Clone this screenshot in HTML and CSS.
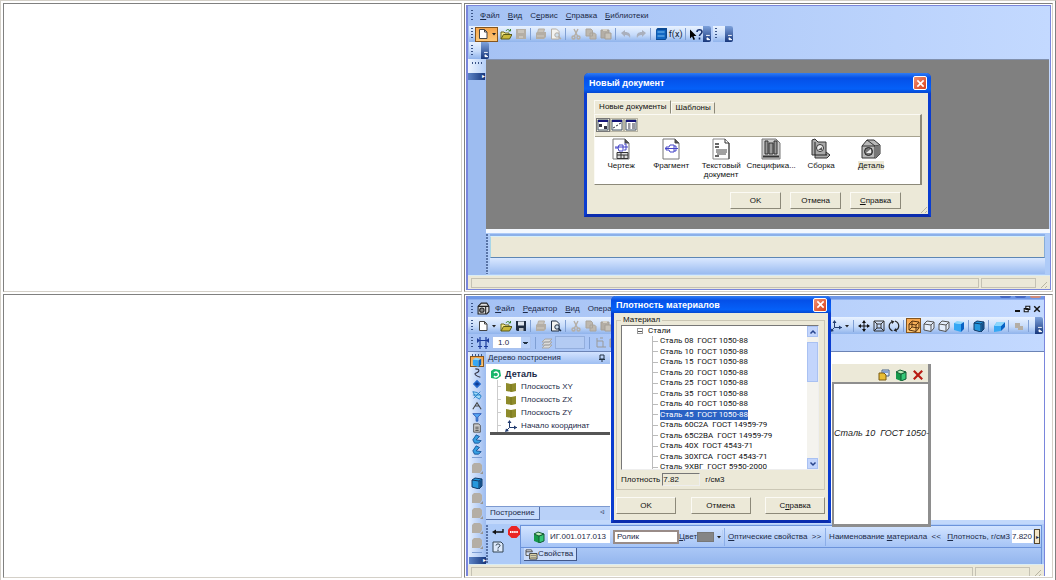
FILE: index.html
```html
<!DOCTYPE html>
<html lang="ru">
<head>
<meta charset="utf-8">
<title>Новый документ</title>
<link rel="stylesheet" href="styles.css">
</head>
<body>
<svg class="defs" aria-hidden="true">
  <symbol id="new" viewBox="0 0 12 12"><path d="M2.500 1.500h5l2.500 2.500v6.500h-7.500z" fill="#fff" stroke="#444"/><path d="M7.500 1.500v2.500h2.500" fill="none" stroke="#444"/></symbol>
  <symbol id="open" viewBox="0 0 12 12"><path d="M1 11V4h3l1 1h4v2" fill="#f4e88a" stroke="#6b6a20"/><path d="M1 11l2.500-4.500H12L9.500 11z" fill="#c9b93a" stroke="#5a5a18"/><path d="M6 3c1-2 3-2 4 0M8.500 3H10.500V1" fill="none" stroke="#35802b"/></symbol>
  <symbol id="save" viewBox="0 0 12 12"><path d="M1 1h10v10H2l-1-1z" fill="currentColor"/><path d="M3 1.500h6v4H3z" fill="#dfe6ee"/><path d="M4 8h4.500v3H4z" fill="#b9c0c8"/></symbol>
  <symbol id="saveoff" viewBox="0 0 12 12"><path d="M1 1h10v10H1z" fill="#b4aea5"/><path d="M3 2h6v3H3zM4 8h4v2H4z" fill="#c9c4bb"/></symbol>
  <symbol id="print" viewBox="0 0 12 12"><path d="M3.500 1h6L8.500 5h-6z" fill="#c9c4bb" stroke="#b4aea5"/><path d="M1 5l1-1h9v5l-2 2H1z" fill="#b4aea5"/><path d="M2 8h7" stroke="#d0cbc2"/></symbol>
  <symbol id="preview" viewBox="0 0 12 12"><path d="M1.500 1h5L9 3.500V11H1.500z" fill="#f3f3f0" stroke="currentColor"/><circle cx="7" cy="7" r="2.200" fill="#cfe0ee" stroke="currentColor"/><path d="M8.500 8.500L11 11" stroke="currentColor" stroke-width="1.500"/></symbol>
  <symbol id="cut" viewBox="0 0 12 12" fill="none" stroke="#b4aea5" stroke-width="1.400"><path d="M4 1l3.500 7M8 1L4.500 8"/><circle cx="3.500" cy="9.500" r="1.500"/><circle cx="8.500" cy="9.500" r="1.500"/></symbol>
  <symbol id="copy" viewBox="0 0 12 12"><path d="M1 1h5l1.500 1.500V8H1zM5 5h4.500L11 6.500V11H5z" fill="#bdb8af" stroke="#aaa49b"/></symbol>
  <symbol id="paste" viewBox="0 0 12 12"><path d="M1 2h8v8H1z" fill="#b4aea5" stroke="#a59f96"/><path d="M3 1h4v2H3z" fill="#d4d0c6"/><path d="M5 5h6v6H5z" fill="#c7c2b9" stroke="#a59f96"/></symbol>
  <symbol id="undo" viewBox="0 0 12 12"><path d="M1 5l4-3v2c4 0 6 2 5 6-1-2-2-3-5-3v2z" fill="#aab0bd"/></symbol>
  <symbol id="redo" viewBox="0 0 12 12"><path d="M11 5L7 2v2C3 4 1 6 2 10c1-2 2-3 5-3v2z" fill="#aab0bd"/></symbol>
  <symbol id="lib" viewBox="0 0 12 12"><path d="M1 1.500L2.500 0H12v10l-1.500 2H1z" fill="#0c4a94"/><path d="M1.500 2h9v9h-9z" fill="#1268c4"/><path d="M2.500 4h7M2.500 8h7" stroke="#7cc0f4"/></symbol>
  <symbol id="help" viewBox="0 0 14 12"><path d="M1 1v9l2-2 1.500 3.500 1.500-.7L4.600 7.500H7.500z" fill="#000"/><path d="M8 3.500C8 .5 13 .5 13 3.500c0 2-2.500 2-2.500 4M10.500 9v2" fill="none" stroke="#16306e" stroke-width="1.600"/></symbol>
  <symbol id="cap" viewBox="0 0 8 17"><path d="M3 10h4M4 14.500V12.500l3 2z" stroke="#fff" fill="#fff"/></symbol>
  <symbol id="draft" viewBox="0 0 18 22"><path d="M1 1h12l4 4v16H1z" fill="#fff" stroke="#777"/><path d="M13 1v4h4" fill="#555" stroke="#444"/><path d="M3 10h3l1-3h4v6H7l-1-3M12 6h2v6h-2M3 9h13" fill="none" stroke="#4646c8"/><path d="M5 14.500h11v6H5zM5 17h11M9 14.500v6M12 17v3.500" fill="#ddd" stroke="#333"/></symbol>
  <symbol id="fragment" viewBox="0 0 18 22"><path d="M1 1h12l4 4v16H1z" fill="#fff" stroke="#777"/><path d="M13 1v4h4" fill="#555" stroke="#444"/><path d="M4 9h3l1-2h4v7H8l-1-2H4zM12 8h2v5h-2M3 10.500h13" fill="none" stroke="#4646c8"/></symbol>
  <symbol id="textdoc" viewBox="0 0 18 22"><path d="M1 1h12l4 4v16H1z" fill="#fff" stroke="#888"/><path d="M13 1v4h4v16" fill="none" stroke="#333"/><path d="M3 6h4M3 9h4M3 18h4" stroke="#333" stroke-width="1.500"/><path d="M4 12h11M4 14h11M5 16h9" stroke="#444"/></symbol>
  <symbol id="spec" viewBox="0 0 20 22"><path d="M1 1h14l4 4v16H1z" fill="#ccc" stroke="#777"/><path d="M4 3h3v13H4zM8 5h4v11H8zM13 3h3v13h-3z" fill="#999" stroke="#333"/><path d="M2 18.500h16" stroke="#333" stroke-width="2"/></symbol>
  <symbol id="assembly" viewBox="0 0 20 22"><path d="M1 2l3-1 3 3h8v10l4 3-3 3H4V17H1z" fill="#aaa" stroke="#333"/><path d="M4 4v13h12M15 14v3" fill="none" stroke="#222"/><circle cx="9" cy="10" r="3.500" fill="#eee" stroke="#333"/><path d="M7 12l4-3v3z" fill="#555"/></symbol>
  <symbol id="detail" viewBox="0 0 20 22"><path d="M1 8l5-6h7l6 5v9l-4 4H1z" fill="#b8b8b8" stroke="#333"/><path d="M1 8h13v12M14 8l5-1M6 2l8 6" fill="none" stroke="#333"/><path d="M14 8l5-1v9l-4 4h-1z" fill="#777"/><circle cx="7.500" cy="13.500" r="4" fill="#777" stroke="#222"/><path d="M5 15l5-4v4z" fill="#eee"/></symbol>
  <symbol id="v1" viewBox="0 0 12 12"><path d="M1 1h10v10H1z" fill="#fff" stroke="#456"/><path d="M1 2h10" stroke="#15157a" stroke-width="2"/><path d="M2 5h3v3H2zM7 7h3v3H7z" fill="#334"/></symbol>
  <symbol id="v2" viewBox="0 0 12 12"><path d="M1 1h10v10H1z" fill="#fff" stroke="#456"/><path d="M1 2h10" stroke="#15157a" stroke-width="2"/><path d="M2 9l2-1M5 7l2-1M8 5l2-1" stroke="#334"/></symbol>
  <symbol id="v3" viewBox="0 0 12 12"><path d="M1 1h10v10H1z" fill="#fff" stroke="#456"/><path d="M1 2h10" stroke="#15157a" stroke-width="2"/><path d="M3 5h2.500M3 7h2.500M3 9h2.500M7 5h3M7 7h3M7 9h3" stroke="#334"/></symbol>
  <symbol id="x" viewBox="0 0 10 10"><path d="M1.500 1.500l7 7M8.500 1.500l-7 7" stroke="currentColor" stroke-width="1.800"/></symbol>
  <symbol id="app" viewBox="0 0 12 12"><path d="M1 4l3-3h5l2 3v5l-2 2H1z" fill="#ddd" stroke="#222"/><path d="M1 4h7v7M8 4h3" fill="none" stroke="#222"/><circle cx="4.500" cy="7.500" r="2" fill="#888" stroke="#222"/></symbol>
  <symbol id="step" viewBox="0 0 12 12"><path d="M3 0v12M9 0v12M0 3.500h12" stroke="#1c3c9c" stroke-width="1.200"/><path d="M0 1v5l3-2.500zM12 1v5L9 3.500z" fill="#1c3c9c"/><path d="M1 9.500h4M7 9.500h4" stroke="#1c3c9c"/></symbol>
  <symbol id="layers" viewBox="0 0 12 12"><path d="M1 5l3-3h7L8 5zM1 8l3-3h7L8 8zM1 11l3-3h7l-3 3z" fill="#dcdcdc" stroke="#a8a8a8"/></symbol>
  <symbol id="axisg" viewBox="0 0 12 12"><path d="M2 1v9h9M2 4h6v6M5 1h3" fill="none" stroke="#999"/></symbol>
  <symbol id="cubeb" viewBox="0 0 12 12"><path d="M1 3l7 1v8L1 10z" fill="#36a8f4"/><path d="M1 3l3-2 7 1-3 2z" fill="#8bd6fc"/><path d="M8 4l3-2v7l-3 3z" fill="#0862c4"/></symbol>
  <symbol id="cubed" viewBox="0 0 12 12"><path d="M1 3l3-2 7 1v7l-3 3-7-2z" fill="#2597dc" stroke="#123a68"/><path d="M1 3l7 1v8M8 4l3-2" fill="none" stroke="#123a68"/><path d="M8.500 4.500l2.500-2v6.500l-2.500 2z" fill="#164f88"/></symbol>
  <symbol id="cubew" viewBox="0 0 12 12"><path d="M1 4l3-3 7 1v6l-3 3.500-7-1.500zM1 4l7 1v6.500M8 5l3-3" fill="#e4eefc" stroke="#555"/></symbol>
  <symbol id="cubex" viewBox="0 0 12 12"><path d="M1 4l3-3 7 1v6l-3 3.500-7-1.500zM1 4l7 1v6.500M8 5l3-3M4 1v6l7 1M4 7l-3 3" fill="none" stroke="#5a3510"/></symbol>
  <symbol id="persp" viewBox="0 0 12 12"><path d="M1 6l3-4h8l-4 4v5l-7 1z" fill="#36a8f4"/><path d="M8 6l4-4v5l-4 4z" fill="#0862c4"/><path d="M1 6l3-4h8L8 6z" fill="#8bd6fc"/></symbol>
  <symbol id="gears" viewBox="0 0 12 12"><path d="M2 3h5v3h3v4H5V8H2z" fill="#b4aea5"/></symbol>
  <symbol id="axes" viewBox="0 0 12 12"><path d="M4.500 1v6.500H12M4.500 7.500L1 11" fill="none" stroke="#223c70"/><path d="M4.500 0L2.500 3h4zM12 7.500l-3-2v4zM0 12l1-3.500L4 11z" fill="#223c70"/></symbol>
  <symbol id="move" viewBox="0 0 12 12"><path d="M6 1v10M1 6h10" stroke="#111"/><path d="M6 0L4 3h4zM6 12L4 9h4zM0 6l3-2v4zM12 6L9 4v4z" fill="#111"/></symbol>
  <symbol id="fit" viewBox="0 0 12 12"><path d="M1 1h10v10H1zM4 4h4v4H4zM1 1l3 3M11 1L8 4M1 11l3-3M11 11L8 8" fill="none" stroke="#333"/></symbol>
  <symbol id="rotate" viewBox="0 0 12 12"><path d="M5 1.500C0 3 0 9 4.500 11M7 1C12 3 12 9 7 10.500" fill="none" stroke="#222" stroke-width="1.200"/><path d="M3 0l3.500 1.500L4 4zM9 12l-3.500-1.500L8 8z" fill="#222"/></symbol>
  <symbol id="curve" viewBox="0 0 12 12"><path d="M4 1c6 0 5 4 1 5s1 4 5 5" fill="none" stroke="#334" stroke-width="1.300"/></symbol>
  <symbol id="rhomb" viewBox="0 0 12 12"><path d="M6 1l5 5-5 5-5-5z" fill="#2268cc"/><path d="M3 6l3-2 3 2-3 2z" fill="#103d94"/></symbol>
  <symbol id="surf" viewBox="0 0 12 12"><path d="M1 2l5 1 5 4-2 4-5-3z" fill="#a4dcf8" stroke="#1a78c4"/><path d="M2 10l8-8M1 6h9" stroke="#1a78c4"/></symbol>
  <symbol id="dims" viewBox="0 0 12 12"><path d="M1 10l5-8 5 8M4 6l4 0" fill="none" stroke="#444" stroke-width="1.300"/></symbol>
  <symbol id="filter" viewBox="0 0 12 12"><path d="M1 2h10L7 6v5H5V6z" fill="#58a8f4" stroke="#1c4cae"/></symbol>
  <symbol id="sheet" viewBox="0 0 12 12"><path d="M2 1h6l2 2v8H2z" fill="#ccc" stroke="#444"/><path d="M4 5h4M4 7h4M4 9h4" stroke="#444"/></symbol>
  <symbol id="bend" viewBox="0 0 12 12"><path d="M5 1l4 2-4 4 6 1-3 3H3L1 7z" fill="#36a0e4" stroke="#134c92"/></symbol>
  <symbol id="grey" viewBox="0 0 12 12"><path d="M1 3l2-2h6l2 2v5l-2 3H1z" fill="#b4aea5"/><path d="M12 9v3H9z" fill="#9a9690"/></symbol>
  <symbol id="green" viewBox="0 0 12 12"><path d="M1 3l3-2 6 1 1 6-4 3-6-1z" fill="#16b66a"/><path d="M4 5a2.500 2.500 0 1 1 0 3" fill="none" stroke="#fff" stroke-width="1.400"/></symbol>
  <symbol id="plane" viewBox="0 0 12 12"><path d="M1 2l5 1 5-1v8l-4 1-6-1z" fill="#8e8b2b"/><path d="M6 3v8" stroke="#77741d"/></symbol>
  <symbol id="book" viewBox="0 0 12 12"><path d="M1 3l5 2v7l-5-2z" fill="#16994a"/><path d="M6 5l5-2v7l-5 2z" fill="#36c877" stroke="#115c32"/><path d="M1 3l4-2 6 2-5 2z" fill="#bceeb9" stroke="#115c32"/></symbol>
  <symbol id="props" viewBox="0 0 12 12"><path d="M4 1h7v6H4z" fill="#dfe9f7" stroke="#47638c"/><path d="M1 4h5l2 2v5H1z" fill="#e7bd35" stroke="#7d5c15"/><path d="M5 3h5" stroke="#2659ae"/></symbol>
  <symbol id="tabicon" viewBox="0 0 14 12"><path d="M1 1h6l1 2H1zM1 3v4h3" fill="#f2f6fc" stroke="#444"/><path d="M5 5h8v6H5z" fill="#f4e9b4" stroke="#333"/><path d="M6 7h6M6 9h6" stroke="#777"/></symbol>
  <symbol id="enter" viewBox="0 0 12 12"><path d="M11 3v3H3" fill="none" stroke="#111" stroke-width="1.400"/><path d="M0 6l4-2.500v5z" fill="#111"/></symbol>
  <symbol id="stop" viewBox="0 0 12 12"><path d="M3.500 0h5L12 3.500v5L8.500 12h-5L0 8.500v-5z" fill="#ea2424"/><path d="M2 6h8" stroke="#fff" stroke-width="2" stroke-dasharray="1.500 .6"/></symbol>
  <symbol id="qbox" viewBox="0 0 12 12"><path d="M1 1h8l2 2v8H1z" fill="#dce9fb" stroke="#345"/><path d="M4 4.500c0-2 4-2 4 0 0 1.500-2 1-2 3M6 8.500v1.500" fill="none" stroke="#234"/></symbol>
  <symbol id="pin" viewBox="0 0 8 8"><path d="M2 1h4v4H2zM1 5.500h6M4 5v3" fill="none" stroke="#234"/></symbol>
  <symbol id="up" viewBox="0 0 8 8"><path d="M1.500 5.500L4 3l2.500 2.500" fill="none" stroke="#27448c" stroke-width="1.500"/></symbol>
  <symbol id="down" viewBox="0 0 8 8"><path d="M1.500 2.500L4 5l2.500-2.500" fill="none" stroke="#27448c" stroke-width="1.500"/></symbol>
  <symbol id="tri" viewBox="0 0 6 6"><path d="M1 2h4L3 4.500z" fill="#222"/></symbol>
  <symbol id="restore" viewBox="0 0 10 10"><path d="M3.500 1.500h5v4h-5zM1.500 4.500h5v4h-5z" fill="#e5efff" stroke="#111" stroke-width="1.300"/></symbol>
</svg>

<main class="sheet">
  <section class="cell"></section>
  <section class="cell">
    <div class="window">
      <nav class="menu">
        <i class="grip"></i>
        <a href="#"><u>Ф</u>айл</a><a href="#"><u>В</u>ид</a><a href="#">С<u>е</u>рвис</a><a href="#"><u>С</u>правка</a><a href="#"><u>Б</u>иблиотеки</a>
      </nav>
      <div class="bar">
        <div class="strip">
          <i class="grip"></i>
          <button class="tool wide hot" aria-label="Создать"><svg><use href="#new"/></svg><svg class="tri"><use href="#tri"/></svg></button>
          <button class="tool" aria-label="Открыть"><svg><use href="#open"/></svg></button>
          <button class="tool" aria-label="Сохранить"><svg><use href="#saveoff"/></svg></button>
          <i class="sep"></i>
          <button class="tool" aria-label="Печать"><svg><use href="#print"/></svg></button>
          <button class="tool off" aria-label="Просмотр"><svg><use href="#preview"/></svg></button>
          <i class="sep"></i>
          <button class="tool" aria-label="Вырезать"><svg><use href="#cut"/></svg></button>
          <button class="tool" aria-label="Копировать"><svg><use href="#copy"/></svg></button>
          <button class="tool" aria-label="Вставить"><svg><use href="#paste"/></svg></button>
          <i class="sep"></i>
          <button class="tool" aria-label="Отменить"><svg><use href="#undo"/></svg></button>
          <button class="tool" aria-label="Повторить"><svg><use href="#redo"/></svg></button>
          <i class="sep"></i>
          <button class="tool" aria-label="Менеджер библиотек"><svg><use href="#lib"/></svg></button>
          <button class="tool fx">f(x)</button>
          <i class="sep"></i>
          <button class="tool" aria-label="Помощь"><svg class="big"><use href="#help"/></svg></button>
          <button class="cap" aria-label="Ещё"><svg><use href="#cap"/></svg></button>
        </div>
        <div class="strip short"><i class="grip"></i><button class="cap" aria-label="Ещё"><svg><use href="#cap"/></svg></button></div>
      </div>
      <div class="bar"><div class="strip short"><i class="grip"></i><button class="cap" aria-label="Ещё"><svg><use href="#cap"/></svg></button></div></div>
      <div class="body">
        <div class="side"><div class="stub"><i class="hgrip"></i></div><button class="endcap" aria-label="Панели">▸</button></div>
        <div class="content">
          <div class="desk"></div>
          <div class="lower">
            <i class="dots"></i>
            <div class="message"><div class="field"></div><div class="glow"></div></div>
          </div>
        </div>
      </div>
      <div class="status"><span></span><span class="last"></span><i class="size"></i></div>

      <div class="dialog create" role="dialog" aria-labelledby="t1">
        <header><h2 id="t1">Новый документ</h2><button class="close" aria-label="Закрыть"><svg><use href="#x"/></svg></button></header>
        <div class="pane">
          <div class="tabs"><button class="on">Новые документы</button><button>Шаблоны</button></div>
          <div class="page">
            <div class="views">
              <button class="on" aria-label="Крупные значки"><svg><use href="#v1"/></svg></button><button aria-label="Мелкие значки"><svg><use href="#v2"/></svg></button><button aria-label="Список"><svg><use href="#v3"/></svg></button>
            </div>
            <ul class="docs">
              <li><svg><use href="#draft"/></svg><span>Чертеж</span></li>
              <li><svg><use href="#fragment"/></svg><span>Фрагмент</span></li>
              <li><svg><use href="#textdoc"/></svg><span>Текстовый документ</span></li>
              <li><svg><use href="#spec"/></svg><span>Специфика...</span></li>
              <li><svg><use href="#assembly"/></svg><span>Сборка</span></li>
              <li><svg><use href="#detail"/></svg><span class="picked">Деталь</span></li>
            </ul>
          </div>
          <footer><button class="push">OK</button><button class="push">Отмена</button><button class="push"><u>С</u>правка</button></footer>
          <i class="size corner"></i>
        </div>
      </div>
    </div>
  </section>

  <section class="cell"></section>
  <section class="cell">
    <div class="window second">
      <div class="caption"><i></i><i></i><i></i></div>
      <nav class="menu">
        <i class="grip"></i><svg class="app"><use href="#app"/></svg>
        <a href="#"><u>Ф</u>айл</a><a href="#"><u>Р</u>едактор</a><a href="#"><u>В</u>ид</a><a href="#">Опера</a>
        <span class="mdi"><button aria-label="Свернуть" class="min"></button><button aria-label="Восстановить"><svg><use href="#restore"/></svg></button><button aria-label="Закрыть"><svg><use href="#x"/></svg></button></span>
      </nav>
      <div class="bar long">
        <i class="grip"></i>
        <button class="tool wide" aria-label="Создать"><svg><use href="#new"/></svg><svg class="tri"><use href="#tri"/></svg></button>
        <button class="tool" aria-label="Открыть"><svg><use href="#open"/></svg></button>
        <button class="tool" aria-label="Сохранить"><svg><use href="#save"/></svg></button>
        <i class="sep"></i>
        <button class="tool" aria-label="Печать"><svg><use href="#print"/></svg></button>
        <button class="tool" aria-label="Просмотр"><svg><use href="#preview"/></svg></button>
        <i class="sep"></i>
        <button class="tool" aria-label="Вырезать"><svg><use href="#cut"/></svg></button>
        <button class="tool" aria-label="Копировать"><svg><use href="#copy"/></svg></button>
        <button class="tool" aria-label="Вставить"><svg><use href="#paste"/></svg></button>
        <i class="fill"></i>
        <button class="tool wide" aria-label="Ориентация"><svg><use href="#axes"/></svg><svg class="tri"><use href="#tri"/></svg></button>
        <i class="sep"></i>
        <button class="tool" aria-label="Сдвинуть"><svg><use href="#move"/></svg></button>
        <button class="tool" aria-label="Показать все"><svg><use href="#fit"/></svg></button>
        <button class="tool" aria-label="Повернуть"><svg><use href="#rotate"/></svg></button>
        <i class="sep"></i>
        <button class="tool hot" aria-label="Каркас"><svg><use href="#cubex"/></svg></button>
        <button class="tool" aria-label="Без невидимых линий"><svg><use href="#cubew"/></svg></button>
        <button class="tool" aria-label="Невидимые линии тонкие"><svg><use href="#cubew"/></svg></button>
        <button class="tool" aria-label="Полутоновое"><svg><use href="#cubeb"/></svg></button>
        <i class="sep"></i>
        <button class="tool" aria-label="Полутоновое с каркасом"><svg><use href="#cubed"/></svg></button>
        <i class="sep"></i>
        <button class="tool" aria-label="Перспектива"><svg><use href="#persp"/></svg></button>
        <i class="sep"></i>
        <button class="tool" aria-label="Упрощенное"><svg><use href="#gears"/></svg></button>
        <i class="sep end"></i>
        <button class="cap" aria-label="Ещё"><svg><use href="#cap"/></svg></button>
      </div>
      <div class="bar state">
        <i class="grip"></i>
        <svg class="ico"><use href="#step"/></svg>
        <select class="combo" aria-label="Шаг курсора"><option>1.0</option></select>
        <i class="sep"></i>
        <svg class="ico"><use href="#layers"/></svg>
        <select class="combo off" aria-label="Слой" disabled><option></option></select>
        <i class="sep"></i>
        <svg class="ico"><use href="#axisg"/></svg><svg class="ico"><use href="#paste"/></svg>
      </div>
      <div class="body">
        <div class="side rail">
          <i class="hgrip"></i>
          <button class="hot" aria-label="Деталь"><svg><use href="#cubeb"/></svg></button>
          <button aria-label="Кривые"><svg><use href="#curve"/></svg></button>
          <button aria-label="Поверхности"><svg><use href="#rhomb"/></svg></button>
          <button aria-label="Массивы"><svg><use href="#surf"/></svg></button>
          <button aria-label="Измерения"><svg><use href="#dims"/></svg></button>
          <button aria-label="Фильтры"><svg><use href="#filter"/></svg></button>
          <button aria-label="Спецификация"><svg><use href="#sheet"/></svg></button>
          <button aria-label="Листовое тело"><svg><use href="#bend"/></svg></button>
          <button aria-label="Сгиб"><svg><use href="#bend"/></svg></button>
          <i class="hr"></i>
          <button class="tall" aria-label="Выдавливание"><svg><use href="#grey"/></svg></button>
          <button class="tall" aria-label="Заготовка"><svg><use href="#cubed"/></svg></button>
          <button class="tall" aria-label="Вырезание"><svg><use href="#grey"/></svg></button>
          <button class="tall" aria-label="Скругление"><svg><use href="#grey"/></svg></button>
          <button class="tall" aria-label="Отверстие"><svg><use href="#grey"/></svg></button>
          <button class="tall" aria-label="Оболочка"><svg><use href="#grey"/></svg></button>
          <i class="hr"></i>
          <button class="endcap" aria-label="Панели">▸</button>
        </div>
        <div class="content">
          <div class="model">
            <aside class="tree">
              <h3>Дерево построения<svg><use href="#pin"/></svg></h3>
              <div class="treebody">
                <p><svg><use href="#green"/></svg><b>Деталь</b></p>
                <ul>
                  <li><svg><use href="#plane"/></svg>Плоскость XY</li>
                  <li><svg><use href="#plane"/></svg>Плоскость ZX</li>
                  <li><svg><use href="#plane"/></svg>Плоскость ZY</li>
                  <li><svg><use href="#axes"/></svg>Начало координат</li>
                </ul>
              </div>
              <div class="treetabs"><button>Построение</button><span>◃</span></div>
            </aside>
            <div class="canvas"></div>
          </div>
          <div class="lower properties">
            <i class="dots"></i>
            <div class="control">
              <button aria-label="Создать объект"><svg><use href="#enter"/></svg></button><button aria-label="Прервать"><svg><use href="#stop"/></svg></button>
              <button aria-label="Справка"><svg><use href="#qbox"/></svg></button>
            </div>
            <div class="props">
              <div class="proprow">
                <svg class="ico"><use href="#book"/></svg>
                <input class="code" aria-label="Обозначение" value="ИГ.001.017.013">
                <input class="name" aria-label="Наименование" value="Ролик">
                <span class="color"><u>Ц</u>вет</span>
                <button class="swatch" aria-label="Цвет"><i></i><svg class="tri"><use href="#tri"/></svg></button>
                <button class="flat optic"><u>О</u>птические свойства&nbsp; &gt;&gt;</button>
                <button class="flat mat">Наименование <u>м</u>атериала&nbsp; &lt;&lt;</button>
                <label for="dens"><u>П</u>лотность, г/см3</label>
                <input id="dens" class="dens" value="7.820">
                <button class="spin" aria-label="Изменить">▸</button>
              </div>
              <div class="proptabs"><button><svg><use href="#tabicon"/></svg>Свойства</button></div>
            </div>
          </div>
        </div>
      </div>
      <div class="status"><span></span><span class="last"></span><i class="size"></i></div>

      <div class="popup">
        <div class="poptools"><button aria-label="Свойства"><svg><use href="#props"/></svg></button><button aria-label="Справочник"><svg><use href="#book"/></svg></button><button class="del" aria-label="Удалить"><svg><use href="#x"/></svg></button></div>
        <div class="popbody">Сталь 10&nbsp; ГОСТ 1050-</div>
      </div>

      <div class="dialog density" role="dialog" aria-labelledby="t2">
        <header><h2 id="t2">Плотность материалов</h2><button class="close" aria-label="Закрыть"><svg><use href="#x"/></svg></button></header>
        <div class="pane">
          <fieldset>
            <legend>Материал</legend>
            <div class="list">
              <div class="rows">
                <p><i class="box"></i>Стали</p>
                <ul>
                  <li><span>Сталь 08&nbsp; ГОСТ 1050-88</span></li>
                  <li><span>Сталь 10&nbsp; ГОСТ 1050-88</span></li>
                  <li><span>Сталь 15&nbsp; ГОСТ 1050-88</span></li>
                  <li><span>Сталь 20&nbsp; ГОСТ 1050-88</span></li>
                  <li><span>Сталь 25&nbsp; ГОСТ 1050-88</span></li>
                  <li><span>Сталь 35&nbsp; ГОСТ 1050-88</span></li>
                  <li><span>Сталь 40&nbsp; ГОСТ 1050-88</span></li>
                  <li class="sel"><span>Сталь 45&nbsp; ГОСТ 1050-88</span></li>
                  <li><span>Сталь 60С2А&nbsp; ГОСТ 14959-79</span></li>
                  <li><span>Сталь 65С2ВА&nbsp; ГОСТ 14959-79</span></li>
                  <li><span>Сталь 40Х&nbsp; ГОСТ 4543-71</span></li>
                  <li><span>Сталь 30ХГСА&nbsp; ГОСТ 4543-71</span></li>
                  <li><span>Сталь 9ХВГ&nbsp; ГОСТ 5950-2000</span></li>
                </ul>
              </div>
              <div class="scroll"><button aria-label="Вверх"><svg><use href="#up"/></svg></button><i class="thumb"></i><button aria-label="Вниз"><svg><use href="#down"/></svg></button></div>
            </div>
            <div class="value"><label for="rho">Плотность</label><input id="rho" value="7.82" readonly><span>г/см3</span></div>
          </fieldset>
          <footer><button class="push">OK</button><button class="push">Отмена</button><button class="push">С<u>п</u>равка</button></footer>
        </div>
      </div>
    </div>
  </section>
</main>
</body>
</html>
```
FILE: styles.css
```css
* { box-sizing: border-box; }
body { margin: 0; background: #fff; font: 8px/10px "Liberation Sans", Arial, sans-serif; color: #1c2a48; }
button, input, select { font: inherit; color: inherit; margin: 0; padding: 0; border: 0; background: none; border-radius: 0; }
a { color: inherit; text-decoration: none; }
ul { list-style: none; margin: 0; padding: 0; }
p, h2, h3 { margin: 0; font: inherit; }
svg { display: block; flex: none; }
i { display: block; flex: none; }
.defs { position: absolute; width: 0; height: 0; }

.sheet { display: grid; grid-template-columns: 460fr 590fr; gap: 2px; padding: 2px; border: 1px solid; border-color: #d4d0c8 #808080 #808080 #d4d0c8; }
.cell { min-width: 0; padding: 1px; border: 1px solid; border-color: #808080 #d4d0c8 #d4d0c8 #808080; }

.window { position: relative; display: flex; flex-direction: column; background: linear-gradient(90deg, #a5c2f4, #c3d9ff); border: 1px solid #7a86dc; border-left-width: 2px; }
.window.second { margin-right: 6px; border-top: 0; border-bottom: 0; }
.caption { display: flex; justify-content: flex-end; gap: 4px; height: 4px; padding-right: 3px; background: #6f97e6; border-bottom: 1px solid #8fb0f0; }
.caption i { width: 11px; height: 2px; background: #4468c4; border-radius: 0 0 2px 2px; }
.caption i:last-child { background: #cf8a7a; }
.menu { display: flex; align-items: center; height: 20px; gap: 8px; padding-left: 3px; }
.menu .grip { margin-right: -1px; }
.second .menu { height: 17px; }
.second .menu .grip { margin-right: -3px; }
.app { width: 13px; height: 13px; margin: 0 -3px 0 -1px; }
.mdi { margin-left: auto; display: flex; align-items: center; gap: 3px; padding-right: 4px; color: #111; }
.mdi button { width: 7px; height: 8px; }
.mdi svg { width: 8px; height: 8px; }
.mdi .min { width: 5px; border-bottom: 2px solid #111; height: 6px; }

.bar { display: flex; height: 17px; padding-left: 1px; }
.strip, .long { display: flex; align-items: center; height: 17px; background: linear-gradient(#e9f2ff, #c6dbfa 55%, #8fb3ec); border-radius: 0 3px 3px 0; }
.menu + .bar { height: 16px; }
.menu + .bar .strip { height: 16px; }
.strip { padding-left: 2px; }
.strip.short { width: 20px; justify-content: space-between; }
.strip + .strip { margin-left: 2px; }
.grip { width: 2px; height: 12px; margin-right: 2px; background: repeating-linear-gradient(#3a5488 0 1px, transparent 1px 3px); }
.tool { display: flex; align-items: center; justify-content: center; width: 15px; height: 15px; flex: none; color: #1f2d42; }
.tool svg { width: 12px; height: 12px; }
.tool svg.big { width: 14px; height: 13px; }
.tool.wide { width: 23px; gap: 2px; }
.tool.off { color: #b4aea5; }
svg.tri, .tool svg.tri { width: 6px; height: 6px; }
.hot { background: linear-gradient(#f7a54a, #fdc877); border: 1px solid #84551e; }
.fx { font: 9px/12px Roboto, sans-serif; color: #123; }
.sep { width: 1px; height: 12px; margin: 0 2px; background: #7f9fd4; }
.sep.end { margin-right: 6px; }
.cap { width: 8px; height: 100%; background: linear-gradient(#7ea2dc, #17377c); border-radius: 0 2px 2px 0; flex: none; }
.cap svg { width: 8px; height: 16px; }
.menu + .bar.long { height: 17px; padding-left: 3px; }
.long .cap { margin-right: 1px; }
.fill { flex: 1; }
.state { height: 18px; align-items: center; padding-left: 3px; border-bottom: 1px solid #6b83b5; }
.ico { width: 12px; height: 12px; }
.state .ico { margin-left: 2px; }
.combo { appearance: none; width: 39px; height: 13px; margin-left: 3px; padding-left: 5px; border: 1px solid #a9c2ee; }
.combo:not(.off) { background-image: linear-gradient(#234, #234), linear-gradient(#234, #234), linear-gradient(90deg, #fff 28px, #b9d1f8 28px); background-repeat: no-repeat; background-size: 5px 1px, 3px 1px, auto; background-position: 30px 5px, 31px 6px, 0 0; }
.combo.off { width: 30px; margin-left: 2px; background: #b3cbf3; border-color: #93aedd; opacity: 1; }
.state .sep { margin: 0 3px 0 4px; }

.body { display: flex; }
.side { width: 18px; flex: none; background: #9dbcf0; }
.stub { height: 14px; background: linear-gradient(90deg, #eef5ff, #b5cff7); padding-top: 3px; }
.hgrip { width: 11px; height: 2px; margin: 0 auto; background: repeating-linear-gradient(90deg, #3a5488 0 1px, transparent 1px 3px); }
.endcap { display: block; width: 17px; height: 7px; background: linear-gradient(90deg, #5d84c6, #17377c); color: #fff; font-size: 6px; line-height: 7px; text-align: right; }
.content { flex: 1; min-width: 0; }
.desk { height: 170px; background: #808080; border-top: 1px solid #8190ac; margin-right: 1px; }
.lower { display: flex; background: #aecbf8; border-top: 4px solid #f3f8ff; padding: 1px 5px 1px 0; }
.dots { width: 2px; margin-right: 2px; background: repeating-linear-gradient(#5873a6 0 2px, transparent 2px 3px); }
.message { flex: 1; border-top: 2px solid #8bb0ea; }
.field { height: 22px; background: #ebe8d7; border: 1px solid #88add8; border-top-color: #d8f0f8; border-bottom-color: #5d86b4; border-left-color: #a8d6e8; }
.glow { height: 16px; background: linear-gradient(#dae8ff, #9abbf0); }
.status { display: flex; height: 14px; background: #ece9d8; padding: 2px 3px 1px; border-top: 1px solid #d9ecf4; gap: 2px; }
.status span { flex: 1; border: 1px solid #c5c2b4; }
.status .last { flex: 0 0 55px; }
.size { width: 9px; height: 9px; align-self: flex-end; background: repeating-linear-gradient(135deg, transparent 0 2px, #b8b4a2 2px 3px); clip-path: polygon(100% 0, 100% 100%, 0 100%); }

.dialog { position: absolute; background: #ece9d8; border: 3px solid #0a3cd0; border-top: 0; border-bottom-color: #0a2cae; border-radius: 5px 5px 0 0; color: #111; }
.dialog header { display: flex; align-items: center; justify-content: space-between; height: 20px; margin: 0 -3px; padding: 0 4px 0 5px; background: linear-gradient(#2f7cf4, #0550e8 25%, #0560f8 80%, #0648d0); border-radius: 5px 5px 0 0; color: #fff; }
.dialog h2 { font: bold 9px/12px "Liberation Sans", sans-serif; white-space: nowrap; }
.close { width: 14px; height: 14px; border: 1px solid #fff; border-radius: 2px; background: linear-gradient(135deg, #f09070, #d8401c); display: flex; align-items: center; justify-content: center; color: #fff; }
.close svg { width: 9px; height: 9px; }
.push { width: 51px; height: 17px; border: 1px solid; border-color: #fbfaf4 #8c8979 #8c8979 #fbfaf4; background: #ece9d8; font-size: 8px; }

.create { left: 116px; top: 67px; width: 347px; }
.create .pane { padding: 7px 6px 5px 7px; position: relative; }
.tabs { display: flex; align-items: flex-end; height: 14px; }
.tabs button { height: 12px; padding: 0 3px; border: 1px solid; border-color: #fbfaf4 #8c8979 transparent #fbfaf4; white-space: nowrap; }
.tabs .on { height: 14px; padding: 0 4px; }
.page { border: 1px solid; border-color: #fbfaf4 #8c8979 #8c8979 #fbfaf4; border-right-width: 2px; }
.views { display: flex; height: 21px; padding: 3px 1px; }
.views button { width: 14px; height: 14px; border: 1px solid #b9b5a4; display: grid; place-items: center; }
.views .on { border-color: #777; }
.views svg { width: 12px; height: 12px; }
.docs { display: flex; height: 48px; padding: 1px 0 0 1px; background: #fff; border-top: 1px solid #a6a28f; }
.docs li { width: 50px; display: flex; flex-direction: column; align-items: center; gap: 1px; text-align: center; line-height: 9px; }
.docs svg { width: 20px; height: 22px; }
.picked { background: #ece9d8; }
.create footer { display: flex; gap: 9px; justify-content: flex-end; padding: 7px 21px 0 0; }
.corner { position: absolute; right: 1px; bottom: 1px; }

.rail { display: flex; flex-direction: column; align-items: center; background: linear-gradient(90deg, #e6f0ff, #9dbcf0); padding-top: 2px; gap: 0; }
.rail button { width: 14px; height: 11px; display: grid; place-items: center; }
.rail svg { width: 10px; height: 10px; }
.rail .tall { height: 15px; }
.rail .tall svg { width: 12px; height: 12px; }
.rail .hr { width: 10px; height: 1px; background: #7f9fd4; margin: 2px 0; }
.rail .endcap { display: block; width: 17px; height: 7px; margin-top: auto; }
.model { display: flex; height: 168px; background: #fff; }
.tree { width: 124px; display: flex; flex-direction: column; background: #fff; }
.tree h3 { display: flex; align-items: center; justify-content: space-between; height: 12px; padding: 0 4px 0 2px; background: linear-gradient(#d3e3ff, #9fbff2); }
.tree h3 svg { width: 8px; height: 8px; }
.treebody { flex: 1; padding: 3px 0 0 4px; }
.treebody p { display: flex; align-items: center; gap: 3px; height: 13px; font-size: 9px; }
.treebody svg { width: 12px; height: 12px; }
.treebody ul { border-bottom: 3px solid #555; padding-left: 7px; }
.treebody li { display: flex; align-items: center; gap: 4px; height: 13px; border-left: 1px solid #ccc; white-space: nowrap; }
.treebody li::before { content: ""; width: 3px; border-top: 1px solid #ccc; }
.treetabs { display: flex; justify-content: space-between; height: 14px; padding-right: 6px; background: #b9d1f8; border-top: 1px solid #7d9ad0; }
.treetabs button { padding: 0 4px; background: #c7dbfb; border-right: 1px solid #5470a8; border-bottom: 1px solid #5470a8; }
.canvas { flex: 1; background: #fff; }
.properties { border-top-color: #c2d8fb; padding: 1px 2px 0 0; }
.control { width: 30px; display: flex; flex-wrap: wrap; align-content: flex-start; gap: 3px 4px; padding: 1px 0 0 2px; }
.control button { width: 12px; height: 12px; }
.control svg { width: 12px; height: 12px; }
.props { flex: 1; min-width: 0; display: flex; flex-direction: column; border: 1px solid #6c93da; border-bottom: 0; background: linear-gradient(#c4daff, #a9c6f5 60%, #94b6ee); }
.proprow { display: flex; align-items: center; height: 22px; padding: 0 1px 0 12px; white-space: nowrap; background: linear-gradient(#d2e3ff, #a5c4f6); border-bottom: 1px solid #6c93da; }
.proprow input { background: #fff; height: 13px; }
.proprow .code { width: 62px; margin-left: 3px; padding-left: 2px; }
.proprow .name { width: 66px; height: 14px; margin-left: 3px; padding-left: 2px; border: 2px solid #998c88; }
.color { width: 18px; }
.swatch { display: flex; align-items: center; gap: 2px; width: 26px; height: 13px; border-right: 1px solid #b8cff3; }
.swatch i { width: 17px; height: 10px; background: #858585; border: 1px solid #777; }
.flat { height: 18px; text-align: left; padding-left: 3px; border-left: 1px solid #8caee8; flex: none; }
.optic { margin-left: 1px; width: 101px; }
.mat { padding-right: 3px; margin-right: auto; }
.proprow .dens { width: 21px; margin-left: 2px; }
.spin { width: 6px; height: 15px; margin-left: 1px; border: 1px solid #54462e; background: #f3e6c8; font-size: 6px; line-height: 12px; }
.proptabs { height: 16px; padding-left: 3px; }
.proptabs button { display: flex; align-items: center; height: 13px; padding: 0 3px 0 1px; background: #cadcfa; border-right: 1px solid #42588a; border-bottom: 1px solid #42588a; }
.proptabs svg { width: 13px; height: 11px; }
.second .status { height: 12px; padding-bottom: 0; }
.second .status span { border-bottom: 0; }

.popup { position: absolute; left: 364px; top: 68px; width: 99px; background: #ece9d8; border-right: 3px solid #8e8e8e; }
.poptools { display: flex; justify-content: flex-end; gap: 5px; height: 18px; padding: 3px 4px 0 0; }
.poptools svg { width: 12px; height: 12px; }
.del { color: #b81c14; }
.popbody { height: 145px; padding-top: 42px; white-space: nowrap; background: #fff; border: 2px solid #8e8e8e; border-right: 0; border-bottom-width: 3px; color: #222; font: italic 9px/14px "Liberation Sans", sans-serif; }

.density { left: 143px; top: 0; width: 220px; }
.density header { height: 17px; }
.density .pane { padding: 2px 3px 6px 2px; }
fieldset { margin: 0; padding: 0 5px 3px 4px; border: 1px solid #cbc7b5; min-width: 0; }
legend { padding: 0 2px; margin-left: 0; }
.list { display: flex; height: 145px; background: #fff; border: 1px solid; border-color: #777 #eee #eee #777; overflow: hidden; }
.rows { flex: 1; padding-left: 15px; white-space: nowrap; font: 8px/10px Roboto, sans-serif; }
.rows p { display: flex; align-items: center; gap: 5px; height: 10px; }
.box { width: 6px; height: 6px; border: 1px solid #999; background: linear-gradient(#555, #555) center / 4px 1px no-repeat; }
.rows ul { display: flex; flex-direction: column; justify-content: space-between; height: 136px; margin-left: 15px; border-left: 1px solid #bbb; }
.rows li { display: flex; align-items: center; height: 10px; gap: 2px; }
.rows li::before { content: ""; width: 5px; border-top: 1px solid #bbb; }
.sel span { background: #2a62c4; color: #fff; }
.scroll { width: 11px; display: flex; flex-direction: column; background: #f4f3ee; }
.scroll button { width: 11px; height: 11px; background: #c3d5fc; border: 1px solid #a9c1f2; display: grid; place-items: center; }
.scroll button svg { width: 8px; height: 8px; }
.thumb { height: 40px; margin: 5px 0 auto; background: #c3d5fc; border: 1px solid #a9c1f2; }
.value { display: flex; align-items: center; padding-top: 3px; }
.value input { width: 38px; height: 13px; margin: 0 5px 0 2px; border: 1px solid; border-color: #777 #eee #eee #777; }
.density footer { display: flex; justify-content: space-between; padding: 7px 0 0; }
.density .push { width: 60px; }
```
